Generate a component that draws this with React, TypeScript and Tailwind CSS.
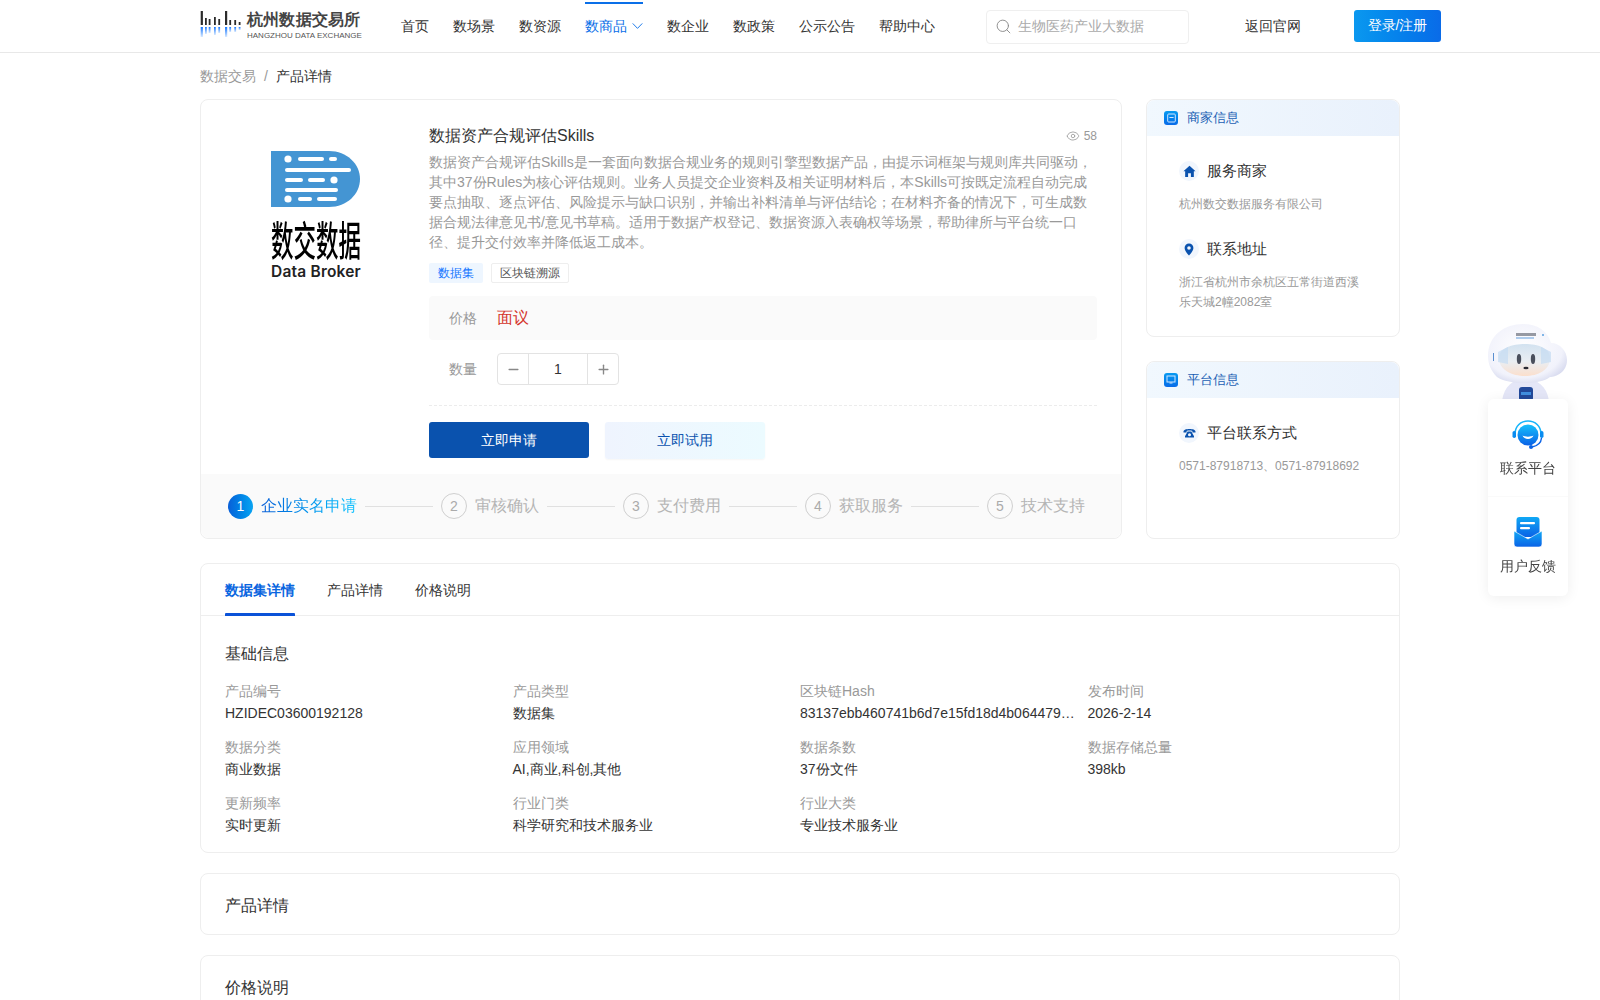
import React from "react";
import { Search, Eye, Minus, Plus } from "lucide-react";

const nav = ["首页", "数场景", "数资源", "数商品", "数企业", "数政策", "公示公告", "帮助中心"];
const steps = ["企业实名申请", "审核确认", "支付费用", "获取服务", "技术支持"];
const info: [string, string][] = [
  ["产品编号", "HZIDEC03600192128"],
  ["产品类型", "数据集"],
  ["区块链Hash", "83137ebb460741b6d7e15fd18d4b064479…"],
  ["发布时间", "2026-2-14"],
  ["数据分类", "商业数据"],
  ["应用领域", "AI,商业,科创,其他"],
  ["数据条数", "37份文件"],
  ["数据存储总量", "398kb"],
  ["更新频率", "实时更新"],
  ["行业门类", "科学研究和技术服务业"],
  ["行业大类", "专业技术服务业"],
];

function HzLogo() {
  const bars: [number, number, number][] = [
    [0.7, 14, 2.2], [5, 7, 1.8], [8.7, 6, 1.8], [14, 8, 1.8], [18.3, 6, 1.8], [25, 14, 2.2], [29.3, 5, 1.8], [34.3, 5, 1.8], [38.7, 3, 1.8],
  ];
  return (
    <svg width="42" height="32" viewBox="0 0 42 32" className="shrink-0">
      <defs>
        <linearGradient id="hzr" x1="0" y1="0" x2="0" y2="1">
          <stop offset="0" stopColor="#1677ff" />
          <stop offset="1" stopColor="#d8e9ff" />
        </linearGradient>
      </defs>
      {bars.map(([x, h, w], i) => (
        <rect key={i} x={x} y={15 - h} width={w} height={h} fill="#2b2b2b" />
      ))}
      {bars.map(([x, h, w], i) => (
        <rect key={"r" + i} x={x} y={17} width={w} height={Math.min(h, 10)} fill="url(#hzr)" />
      ))}
    </svg>
  );
}

function Header() {
  return (
    <header className="h-[53px] border-b border-[#e8e8e8] bg-white flex items-center pl-[200px]">
      <div className="flex items-center w-[161px] shrink-0">
        <HzLogo />
        <div className="ml-[5px] flex flex-col mt-[-2px]">
          <span className="text-[16px] leading-[20px] font-bold text-[#444] whitespace-nowrap tracking-[0.2px]">杭州数据交易所</span>
          <span className="text-[8px] leading-[10px] text-[#555] whitespace-nowrap mt-[1px]">HANGZHOU DATA EXCHANGE</span>
        </div>
      </div>
      <nav className="flex items-center gap-6 ml-[40px] h-full">
        {nav.map((n) =>
          n === "数商品" ? (
            <div key={n} className="relative h-full flex items-center gap-[5px] text-[14px] text-[#0a6fe8]">
              <span className="absolute top-[2px] left-0 right-0 h-[2px] bg-[#0a6fe8]" />
              <span>{n}</span>
              <svg width="11" height="8" viewBox="0 0 12 8"><path d="M.8 1.2 6 6.6 11.2 1.2" fill="none" stroke="#0a6fe8" strokeWidth="1" /></svg>
            </div>
          ) : (
            <span key={n} className="text-[14px] text-[#333]">{n}</span>
          )
        )}
      </nav>
      <div className="ml-[51px] w-[203px] h-[34px] border border-[#efefef] rounded-[4px] flex items-center pl-[8px] gap-[6px] mt-[1px]">
        <Search size={17} strokeWidth={1.3} className="text-[#888]" />
        <span className="text-[14px] text-[#aaa]">生物医药产业大数据</span>
      </div>
      <span className="ml-[56px] text-[14px] text-[#333]">返回官网</span>
      <button className="ml-[53px] w-[87px] h-[32px] rounded-[3px] text-[14px] text-white bg-gradient-to-r from-[#0b98ef] to-[#0a6be8] mt-[-1px]">登录/注册</button>
    </header>
  );
}

function BrokerLogo() {
  return (
    <div className="w-[90px] flex flex-col items-center">
      <svg width="90" height="56" viewBox="0 0 90 56">
        <path d="M0 0H58C76 0 89 13 89 28C89 43 76 56 58 56H0Z" fill="#4495d3" />
        <g fill="#fff">
          <circle cx="17" cy="8" r="3.6" />
          <rect x="27" y="6" width="26" height="4" rx="2" />
          <rect x="58" y="6" width="8" height="4" rx="2" />
          <rect x="14" y="17" width="66" height="4" rx="2" />
          <rect x="14" y="27" width="18" height="4" rx="2" />
          <rect x="37" y="27" width="17" height="4" rx="2" />
          <circle cx="63" cy="29" r="3.6" />
          <rect x="14" y="37" width="53" height="4" rx="2" />
          <circle cx="17" cy="48" r="3.6" />
          <rect x="27" y="46" width="14" height="4" rx="2" />
          <rect x="46" y="46" width="20" height="4" rx="2" />
        </g>
      </svg>
      <div className="mt-[20px] h-[22px] text-[22.5px] leading-[22px] font-medium text-black whitespace-nowrap scale-y-[1.8] font-['Noto_Sans_CJK_SC']">数交数据</div>
      <div className="mt-[16px] text-[15.5px] leading-[14px] font-semibold text-[#222] whitespace-nowrap tracking-[0.2px] font-['Inter']">Data Broker</div>
    </div>
  );
}

function Stepper() {
  return (
    <div className="flex h-[32px] w-[122px] border border-[#e3e3e3] rounded-[4px] items-stretch">
      <div className="w-[31px] flex items-center justify-center border-r border-[#e3e3e3] text-[#888]"><Minus size={15} strokeWidth={2.2} /></div>
      <div className="flex-1 flex items-center justify-center text-[14px] text-[#333]">1</div>
      <div className="w-[31px] flex items-center justify-center border-l border-[#e3e3e3] text-[#888]"><Plus size={15} strokeWidth={2.2} /></div>
    </div>
  );
}

function Steps() {
  return (
    <div className="h-[64px] bg-[#fafafa] flex items-center pl-[27px] rounded-b-[8px]">
      {steps.map((s, i) => (
        <React.Fragment key={s}>
          {i === 0 ? (
            <span className="w-[25px] h-[25px] rounded-full bg-gradient-to-r from-[#0a5fd8] to-[#0ba4f2] text-white text-[14px] flex items-center justify-center shrink-0">1</span>
          ) : (
            <span className="w-[26px] h-[26px] rounded-full border border-[#cfcfcf] text-[#aaa] text-[14px] flex items-center justify-center shrink-0">{i + 1}</span>
          )}
          <span className={"ml-[8px] text-[16px] whitespace-nowrap " + (i === 0 ? "bg-gradient-to-r from-[#0a5fd8] to-[#19c5ff] bg-clip-text text-transparent" : "text-[#b5b5b5]")}>{s}</span>
          {i < 4 && <span className="mx-[8px] w-[68px] h-px bg-[#e0e0e0] shrink-0" />}
        </React.Fragment>
      ))}
    </div>
  );
}

function MainCard() {
  return (
    <section className="w-[922px] h-[440px] border border-[#eeeeee] rounded-[8px] bg-white flex flex-col shrink-0">
      <div className="flex flex-1 min-h-0">
        <div className="w-[228px] shrink-0 pl-[70px] pt-[51px]"><BrokerLogo /></div>
        <div className="w-[668px] pt-[25px]">
          <div className="flex items-center justify-between h-[22px]">
            <h1 className="text-[16px] text-[#333] font-normal">数据资产合规评估Skills</h1>
            <div className="flex items-center gap-[4px] text-[12px] text-[#999]"><Eye size={14} strokeWidth={1.4} /><span>58</span></div>
          </div>
          <p className="mt-[5px] text-[14px] leading-[20px] text-[#999]">
            数据资产合规评估Skills是一套面向数据合规业务的规则引擎型数据产品，由提示词框架与规则库共同驱动，其中37份Rules为核心评估规则。业务人员提交企业资料及相关证明材料后，本Skills可按既定流程自动完成要点抽取、逐点评估、风险提示与缺口识别，并输出补料清单与评估结论；在材料齐备的情况下，可生成数据合规法律意见书/意见书草稿。适用于数据产权登记、数据资源入表确权等场景，帮助律所与平台统一口径、提升交付效率并降低返工成本。
          </p>
          <div className="flex gap-[8px] mt-[11px]">
            <span className="h-[20px] px-[9px] rounded-[2px] bg-[#eef6ff] text-[12px] leading-[20px] text-[#1677ff]">数据集</span>
            <span className="h-[20px] px-[8px] rounded-[2px] border border-[#eeeeee] text-[12px] leading-[18px] text-[#555]">区块链溯源</span>
          </div>
          <div className="mt-[13px] h-[44px] bg-[#fafafa] rounded-[4px] flex items-center pl-[20px]">
            <span className="text-[14px] text-[#999] w-[48px]">价格</span>
            <span className="text-[16px] text-[#d4332b]">面议</span>
          </div>
          <div className="mt-[13px] flex items-center pl-[20px]">
            <span className="text-[14px] text-[#999] w-[48px]">数量</span>
            <Stepper />
          </div>
          <div className="mt-[20px] border-t border-dashed border-[#ececec]" />
          <div className="mt-[16px] flex gap-[16px] items-start">
            <button className="w-[160px] h-[36px] rounded-[3px] bg-[#0a52ae] text-white text-[14px]">立即申请</button>
            <button className="w-[160px] h-[37px] rounded-[3px] bg-gradient-to-r from-[#eff4fe] to-[#ecfbff] text-[#0a52ae] text-[14px] shadow-[0_1px_2px_rgba(0,0,0,0.04)]">立即试用</button>
          </div>
        </div>
      </div>
      <Steps />
    </section>
  );
}

function SideHeader({ title, icon }: { title: string; icon: React.ReactNode }) {
  return (
    <div className="h-[36px] flex items-center pl-[17px] gap-[9px] rounded-t-[8px] bg-gradient-to-r from-[#f1f8fe] to-[#e9f1fc]">
      <span className="w-[14px] h-[14px] rounded-[3px] bg-gradient-to-b from-[#0a9af0] to-[#0a6be8] flex items-center justify-center">{icon}</span>
      <span className="text-[13px] text-[#1a5fb4]">{title}</span>
    </div>
  );
}

function RowHead({ title, icon }: { title: string; icon: React.ReactNode }) {
  return (
    <div className="flex items-center gap-[8px]">
      <span className="w-[20px] h-[20px] rounded-full bg-[#f1f6fd] flex items-center justify-center">{icon}</span>
      <span className="text-[15px] leading-[22px] text-[#333]">{title}</span>
    </div>
  );
}

const homeIcon = (
  <svg width="13" height="13" viewBox="0 0 12 12"><path d="M6 .8 11.6 5.8H10V11H7.3V7.6H4.7V11H2V5.8H.4Z" fill="#0a52ae" /></svg>
);
const pinIcon = (
  <svg width="12" height="13" viewBox="0 0 12 13"><path fillRule="evenodd" d="M6 .5A4.4 4.4 0 0 1 10.4 5C10.4 8 6 12.5 6 12.5S1.6 8 1.6 5A4.4 4.4 0 0 1 6 .5ZM6 3.2A1.8 1.8 0 1 0 6 6.8 1.8 1.8 0 0 0 6 3.2Z" fill="#0a52ae" /></svg>
);
const phoneIcon = (
  <svg width="13" height="12" viewBox="0 0 13 12"><path fillRule="evenodd" d="M.5 4.5C.5 1.2 12.5 1.2 12.5 4.5V5.6H9.4V4C8 3.4 5 3.4 3.6 4V5.6H.5ZM3.8 6 4.6 4.6H8.4L9.2 6 11 9.2V10.6H2V9.2ZM6.5 6.2A1.5 1.5 0 1 0 6.5 9.2 1.5 1.5 0 0 0 6.5 6.2Z" fill="#0a52ae" /></svg>
);

function SideCards() {
  return (
    <aside className="w-[254px] shrink-0 flex flex-col gap-[24px]">
      <section className="h-[238px] border border-[#eeeeee] rounded-[8px] bg-white">
        <SideHeader title="商家信息" icon={<svg width="9" height="10" viewBox="0 0 9 10"><rect x=".7" y="1" width="7.6" height="8" rx="1" fill="none" stroke="#cfe6ff" strokeWidth="1" /><rect x="2.4" y="4" width="4.2" height="1" fill="#cfe6ff" /></svg>} />
        <div className="pl-[32px] pr-[40px] pt-[24px]">
          <RowHead title="服务商家" icon={homeIcon} />
          <p className="mt-[12px] text-[12px] leading-[20px] text-[#999]">杭州数交数据服务有限公司</p>
          <div className="mt-[24px]"><RowHead title="联系地址" icon={pinIcon} /></div>
          <p className="mt-[12px] text-[12px] leading-[20px] text-[#999]">浙江省杭州市余杭区五常街道西溪乐天城2幢2082室</p>
        </div>
      </section>
      <section className="flex-1 border border-[#eeeeee] rounded-[8px] bg-white">
        <SideHeader title="平台信息" icon={<svg width="10" height="10" viewBox="0 0 10 10"><rect x="1" y="1" width="8" height="6" fill="none" stroke="#cfe6ff" strokeWidth="1" /><rect x="3.5" y="7.5" width="3" height="1" fill="#cfe6ff" /></svg>} />
        <div className="pl-[32px] pr-[30px] pt-[24px]">
          <RowHead title="平台联系方式" icon={phoneIcon} />
          <p className="mt-[12px] text-[12px] leading-[20px] text-[#999] whitespace-nowrap">0571-87918713、0571-87918692</p>
        </div>
      </section>
    </aside>
  );
}

function Detail() {
  return (
    <section className="mt-[24px] h-[290px] border border-[#eeeeee] rounded-[8px] bg-white">
      <div className="h-[52px] border-b border-[#eeeeee] flex gap-8 pl-[24px]">
        {["数据集详情", "产品详情", "价格说明"].map((t, i) => (
          <div key={t} className={"relative h-full flex items-center pt-[1px] text-[14px] " + (i === 0 ? "text-[#0a66e0] font-semibold" : "text-[#333]")}>
            {t}
            {i === 0 && <span className="absolute left-0 right-0 bottom-[-1px] h-[3px] bg-[#0a52d8] rounded-t-[1px]" />}
          </div>
        ))}
      </div>
      <div className="px-[24px] pt-[27px]">
        <h2 className="text-[16px] leading-[22px] font-normal text-[#333]">基础信息</h2>
        <div className="grid grid-cols-4 mt-[16px] gap-y-[12px]">
          {info.map(([k, v]) => (
            <div key={k} className="min-w-0 h-[44px] pr-[12px]">
              <div className="text-[14px] leading-[21px] text-[#999]">{k}</div>
              <div className="text-[14px] leading-[22px] text-[#333] whitespace-nowrap">{v}</div>
            </div>
          ))}
        </div>
      </div>
    </section>
  );
}

function Robot() {
  return (
    <svg width="84" height="78" viewBox="0 0 84 78" className="absolute left-[-3px] top-[-76px]">
      <defs>
        <radialGradient id="cl" cx=".45" cy=".42" r=".68">
          <stop offset="0" stopColor="#ffffff" />
          <stop offset=".72" stopColor="#f1f2fb" />
          <stop offset="1" stopColor="#cdd1ea" />
        </radialGradient>
        <linearGradient id="vis" x1="0" y1="0" x2="0" y2="1">
          <stop offset="0" stopColor="#d2e2f0" />
          <stop offset=".55" stopColor="#eaeef2" />
          <stop offset="1" stopColor="#fbdfcd" />
        </linearGradient>
        <filter id="bl"><feGaussianBlur stdDeviation=".7" /></filter>
      </defs>
      <g filter="url(#bl)">
        <path d="M17 78C19 63 28 56 40 56C52 56 62 63 64 78Z" fill="#e4e6f7" />
        <rect x="34" y="64" width="14" height="14" rx="3" fill="#234a9a" />
        <rect x="36" y="69" width="10" height="3" fill="#3f8fe0" />
        <path d="M3 33C3 12 20 1 38 1C52 1 63 8 66 20C75 20 82 28 82 37C82 49 71 54 65 54C55 62 24 62 12 54C6 48 3 41 3 33Z" fill="url(#cl)" />
        <path d="M14 35C14 25 27 21 40 21C53 21 65 25 65 35C65 47 53 53 40 53C27 53 14 47 14 35Z" fill="url(#vis)" />
        <path d="M13 29 23 24V41L13 39Z" fill="#c4dcf2" opacity=".7" />
        <path d="M66 29 56 24V41L66 39Z" fill="#c4dcf2" opacity=".7" />
        <ellipse cx="34" cy="36" rx="2.2" ry="5" fill="#4a4f5c" />
        <ellipse cx="48" cy="36" rx="2.2" ry="5" fill="#4a4f5c" />
        <ellipse cx="41" cy="45" rx="2.6" ry="1.3" fill="#2a2a30" />
        <rect x="31" y="10" width="20" height="3" fill="#555a68" opacity=".6" />
        <rect x="31" y="14" width="18" height="2" fill="#8db8e6" opacity=".7" />
        <circle cx="58" cy="12" r="1" fill="#5aa0e0" />
        <rect x="8" y="30" width="1" height="8" fill="#5a8fd0" />
      </g>
    </svg>
  );
}

function Floating() {
  return (
    <div className="fixed left-[1488px] top-[399px] w-[80px] h-[197px]">
      <Robot />
      <div className="relative flex flex-col h-full rounded-[6px] bg-white shadow-[0_2px_14px_rgba(0,0,0,0.07)]">
        <div className="h-[98px] flex flex-col items-center pt-[21px] border-b border-[#fafafa]">
          <svg width="32" height="30" viewBox="0 0 32 30">
            <defs>
              <linearGradient id="hs" x1="0" y1="0" x2="0" y2="1">
                <stop offset="0" stopColor="#16c0fb" />
                <stop offset="1" stopColor="#0a62e6" />
              </linearGradient>
            </defs>
            <path d="M3 14C3 6 9 1 16 1C23 1 29 6 29 14" fill="none" stroke="#16b4fa" strokeWidth="1.6" />
            <circle cx="16" cy="15" r="10.5" fill="url(#hs)" />
            <path d="M10.5 15.5C12 20 20 20 21.5 15.5C19 17 13 17 10.5 15.5Z" fill="#fff" />
            <rect x="0.5" y="11" width="3.5" height="7" rx="1.7" fill="#0a8cf0" />
            <rect x="28" y="11" width="3.5" height="7" rx="1.7" fill="#0a8cf0" />
            <path d="M29.5 18C29 24 25 26 20 27" fill="none" stroke="#0a62e6" strokeWidth="1.4" />
            <circle cx="19" cy="27" r="2" fill="#0a62e6" />
          </svg>
          <span className="mt-[8px] text-[14px] leading-[20px] text-[#444]">联系平台</span>
        </div>
        <div className="h-[98px] flex flex-col items-center pt-[20px]">
          <svg width="28" height="30" viewBox="0 0 28 30">
            <defs>
              <linearGradient id="ml" x1="0" y1="0" x2="0" y2="1">
                <stop offset="0" stopColor="#10a8f5" />
                <stop offset="1" stopColor="#0a62e6" />
              </linearGradient>
            </defs>
            <rect x="2.5" y="0" width="23" height="20" rx="3" fill="url(#ml)" />
            <rect x="6" y="5" width="15" height="2.2" rx="1" fill="#fff" />
            <rect x="6" y="10" width="10" height="2.2" rx="1" fill="#fff" />
            <path d="M0 14 14 22 28 14V27A3 3 0 0 1 25 30H3A3 3 0 0 1 0 27Z" fill="url(#ml)" stroke="#fff" strokeWidth=".6" />
          </svg>
          <span className="mt-[9px] text-[14px] leading-[20px] text-[#444]">用户反馈</span>
        </div>
      </div>
    </div>
  );
}

export default function App() {
  return (
    <div className="h-[1000px] overflow-hidden bg-white font-['Liberation_Sans',sans-serif]">
      <Header />
      <main className="w-[1200px] ml-[200px]">
        <div className="h-[46px] flex items-center text-[14px]">
          <span className="text-[#999]">数据交易</span>
          <span className="text-[#999] mx-[8px]">/</span>
          <span className="text-[#333]">产品详情</span>
        </div>
        <div className="flex gap-[24px] items-stretch">
          <MainCard />
          <SideCards />
        </div>
        <Detail />
        <section className="mt-[20px] h-[62px] border border-[#eeeeee] rounded-[8px] flex items-center pl-[24px] pt-[4px] text-[16px] text-[#333]">产品详情</section>
        <section className="mt-[20px] h-[80px] border border-[#eeeeee] rounded-[8px] pl-[24px] pt-[21px] text-[16px] leading-[22px] text-[#333]">价格说明</section>
      </main>
      <Floating />
    </div>
  );
}
